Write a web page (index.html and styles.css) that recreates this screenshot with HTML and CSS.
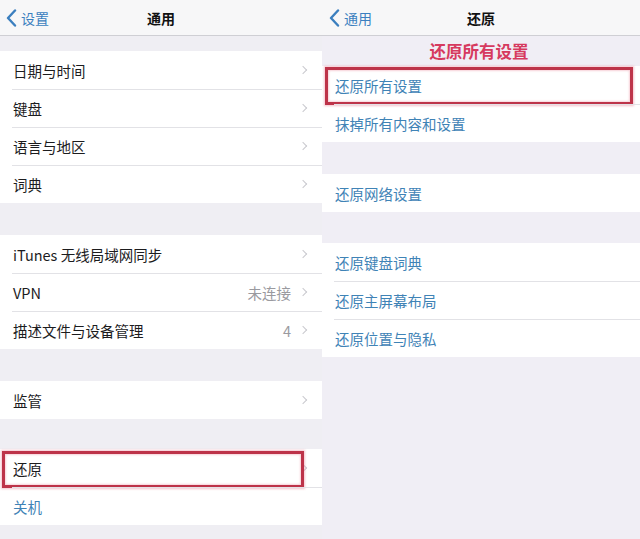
FILE: index.html
```html
<!DOCTYPE html>
<html lang="zh">
<head>
<meta charset="utf-8">
<link rel="stylesheet" href="styles.css">
</head>
<body>
<div class="screen">
  <section class="panel panel-left">
    <header class="nav">
      <div class="back">
        <svg class="back-icon" width="11" height="18" viewBox="0 0 11 18"><path d="M9 1.5 L2 9 L9 16.5" fill="none" stroke="currentColor" stroke-width="2.4" stroke-linecap="round" stroke-linejoin="round"/></svg>
        <span>设置</span>
      </div>
      <div class="title">通用</div>
    </header>
    <div class="spacer s16"></div>
    <ul class="group">
      <li class="row"><span class="label">日期与时间</span><span class="chev"></span></li>
      <li class="row"><span class="label">键盘</span><span class="chev"></span></li>
      <li class="row"><span class="label">语言与地区</span><span class="chev"></span></li>
      <li class="row"><span class="label">词典</span><span class="chev"></span></li>
    </ul>
    <div class="spacer s32"></div>
    <ul class="group">
      <li class="row"><span class="label">iTunes 无线局域网同步</span><span class="chev"></span></li>
      <li class="row"><span class="label">VPN</span><span class="value">未连接</span><span class="chev"></span></li>
      <li class="row"><span class="label">描述文件与设备管理</span><span class="value">4</span><span class="chev"></span></li>
    </ul>
    <div class="spacer s32"></div>
    <ul class="group">
      <li class="row"><span class="label">监管</span><span class="chev"></span></li>
    </ul>
    <div class="spacer s30"></div>
    <ul class="group">
      <li class="row mark mark-left"><span class="label">还原</span><span class="chev"></span></li>
      <li class="row"><span class="label link">关机</span></li>
    </ul>
  </section>
  <section class="panel panel-right">
    <header class="nav">
      <div class="back">
        <svg class="back-icon" width="11" height="18" viewBox="0 0 11 18"><path d="M9 1.5 L2 9 L9 16.5" fill="none" stroke="currentColor" stroke-width="2.4" stroke-linecap="round" stroke-linejoin="round"/></svg>
        <span>通用</span>
      </div>
      <div class="title">还原</div>
    </header>
    <div class="caption">还原所有设置</div>
    <ul class="group">
      <li class="row mark mark-right"><span class="label link">还原所有设置</span></li>
      <li class="row"><span class="label link">抹掉所有内容和设置</span></li>
    </ul>
    <div class="spacer s32"></div>
    <ul class="group">
      <li class="row"><span class="label link">还原网络设置</span></li>
    </ul>
    <div class="spacer s31"></div>
    <ul class="group">
      <li class="row"><span class="label link">还原键盘词典</span></li>
      <li class="row"><span class="label link">还原主屏幕布局</span></li>
      <li class="row"><span class="label link">还原位置与隐私</span></li>
    </ul>
  </section>
</div>
</body>
</html>
```

FILE: styles.css
```css
* { box-sizing: border-box; }
html, body { margin: 0; padding: 0; }
body {
  width: 640px;
  height: 539px;
  overflow: hidden;
  background: #efeef3;
  font-family: "Noto Sans CJK SC", "Noto Sans", sans-serif;
  color: #1c1c1e;
}
.screen {
  display: flex;
  height: 539px;
}
.panel {
  display: flex;
  flex-direction: column;
  background: #efeef3;
}
.panel-left { width: 322px; }
.panel-right { width: 318px; background: #f0eef5; }

.nav {
  height: 36px;
  flex: none;
  display: flex;
  align-items: center;
  position: relative;
  background: #f7f7f8;
  border-bottom: 1px solid #cfcfd4;
}
.back {
  display: flex;
  align-items: center;
  gap: 4px;
  padding-left: 6px;
  color: #3b7fbf;
  font-size: 14px;
}
.panel-right .back { padding-left: 7px; }
.back-icon { display: block; }
.title {
  position: absolute;
  left: 0;
  right: 0;
  top: 0;
  bottom: 0;
  display: flex;
  align-items: center;
  justify-content: center;
  font-size: 14px;
  font-weight: 700;
  color: #111;
  pointer-events: none;
}

.spacer { flex: none; }
.s16 { height: 15px; }
.s30 { height: 30px; }
.s31 { height: 31px; }
.s32 { height: 32px; }

.caption {
  height: 30px;
  flex: none;
  display: flex;
  align-items: center;
  justify-content: center;
  color: #d63a5f;
  font-size: 16.5px;
  font-weight: 700;
  padding-right: 4px;
}

.group {
  list-style: none;
  margin: 0;
  padding: 0;
  background: #fff;
  flex: none;
}
.row {
  position: relative;
  height: 38px;
  display: flex;
  align-items: center;
  padding: 0 14px 0 13px;
  font-size: 14.5px;
}
.row + .row::before {
  content: "";
  position: absolute;
  top: 0;
  left: 12px;
  right: 0;
  height: 1px;
  background: #e2e2e6;
}
.label { flex: 1; white-space: nowrap; }
.link { color: #3f83b6; }
.value {
  color: #9a9a9f;
  margin-right: 9px;
}
.chev {
  width: 6px;
  height: 6px;
  border-top: 1.5px solid #c9c9ce;
  border-right: 1.5px solid #c9c9ce;
  transform: rotate(45deg);
  margin-right: 2px;
}

.mark::after {
  content: "";
  position: absolute;
  border: 3px solid #bd3349;
  box-shadow: 0 0 2px 1px rgba(230, 120, 140, 0.45), inset 0 0 2px 1px rgba(230, 120, 140, 0.35);
  pointer-events: none;
}
.mark-left::after {
  top: 2px;
  bottom: -1px;
  left: 2px;
  right: 18px;
}
.mark-right::after {
  top: 1px;
  bottom: -1px;
  left: 3px;
  right: 7px;
}
```
